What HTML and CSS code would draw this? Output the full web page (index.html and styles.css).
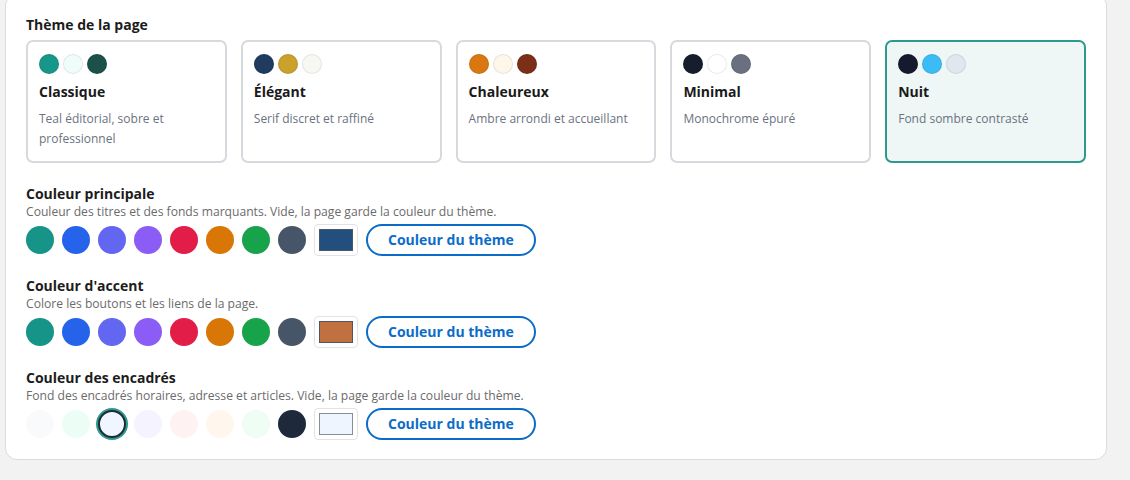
FILE: index.html
```html
<!DOCTYPE html>
<html lang="fr">
<head>
<meta charset="utf-8">
<link rel="stylesheet" href="styles.css">
</head>
<body>
<div class="page">
  <div class="panel">
    <div class="label">Thème de la page</div>
    <div class="themes">
      <div class="theme">
        <div class="dots"><span class="dot" style="background:#16978a"></span><span class="dot" style="background:#effcf9"></span><span class="dot" style="background:#1b5149"></span></div>
        <div class="theme-name">Classique</div>
        <div class="theme-desc">Teal éditorial, sobre et professionnel</div>
      </div>
      <div class="theme">
        <div class="dots"><span class="dot" style="background:#213b60"></span><span class="dot" style="background:#c9a12b"></span><span class="dot" style="background:#f8f8f3"></span></div>
        <div class="theme-name">Élégant</div>
        <div class="theme-desc">Serif discret et raffiné</div>
      </div>
      <div class="theme">
        <div class="dots"><span class="dot" style="background:#d97811"></span><span class="dot" style="background:#fff6ea"></span><span class="dot" style="background:#7b2f19"></span></div>
        <div class="theme-name">Chaleureux</div>
        <div class="theme-desc">Ambre arrondi et accueillant</div>
      </div>
      <div class="theme">
        <div class="dots"><span class="dot" style="background:#161d2c"></span><span class="dot" style="background:#ffffff"></span><span class="dot" style="background:#6b7080"></span></div>
        <div class="theme-name">Minimal</div>
        <div class="theme-desc">Monochrome épuré</div>
      </div>
      <div class="theme selected">
        <div class="dots"><span class="dot" style="background:#151b2d"></span><span class="dot" style="background:#3bbcf5"></span><span class="dot" style="background:#e1e7ef"></span></div>
        <div class="theme-name">Nuit</div>
        <div class="theme-desc">Fond sombre contrasté</div>
      </div>
    </div>

    <div class="section">
      <div class="label">Couleur principale</div>
      <div class="help">Couleur des titres et des fonds marquants. Vide, la page garde la couleur du thème.</div>
      <div class="row">
        <span class="sw" style="background:#159487"></span>
        <span class="sw" style="background:#2563eb"></span>
        <span class="sw" style="background:#6366f1"></span>
        <span class="sw" style="background:#8b5cf6"></span>
        <span class="sw" style="background:#e11d48"></span>
        <span class="sw" style="background:#d97706"></span>
        <span class="sw" style="background:#16a34a"></span>
        <span class="sw" style="background:#475569"></span>
        <span class="picker"><span class="picker-fill" style="background:#224f7e"></span></span>
        <button class="reset">Couleur du thème</button>
      </div>
    </div>

    <div class="section">
      <div class="label">Couleur d'accent</div>
      <div class="help">Colore les boutons et les liens de la page.</div>
      <div class="row">
        <span class="sw" style="background:#159487"></span>
        <span class="sw" style="background:#2563eb"></span>
        <span class="sw" style="background:#6366f1"></span>
        <span class="sw" style="background:#8b5cf6"></span>
        <span class="sw" style="background:#e11d48"></span>
        <span class="sw" style="background:#d97706"></span>
        <span class="sw" style="background:#16a34a"></span>
        <span class="sw" style="background:#475569"></span>
        <span class="picker"><span class="picker-fill" style="background:#c1703f"></span></span>
        <button class="reset">Couleur du thème</button>
      </div>
    </div>

    <div class="section">
      <div class="label">Couleur des encadrés</div>
      <div class="help">Fond des encadrés horaires, adresse et articles. Vide, la page garde la couleur du thème.</div>
      <div class="row">
        <span class="sw" style="background:#f8fafc"></span>
        <span class="sw" style="background:#ecfdf5"></span>
        <span class="sw active" style="background:#eff6ff"></span>
        <span class="sw" style="background:#f5f3ff"></span>
        <span class="sw" style="background:#fef2f2"></span>
        <span class="sw" style="background:#fff7ed"></span>
        <span class="sw" style="background:#f0fdf4"></span>
        <span class="sw" style="background:#1e293b"></span>
        <span class="picker"><span class="picker-fill light" style="background:#eef5ff"></span></span>
        <button class="reset">Couleur du thème</button>
      </div>
    </div>
  </div>
</div>
</body>
</html>
```

FILE: styles.css
```css
* { box-sizing: border-box; }
html, body { margin: 0; padding: 0; }
body {
  background: #f2f2f2;
  font-family: "Open Sans", "Noto Sans", sans-serif;
  color: #1a1a1a;
  width: 1130px;
  height: 480px;
  overflow: hidden;
}
.page {
  padding: 0 23px 0 5px;
}
.panel {
  margin-top: -6px;
  background: #ffffff;
  border: 1px solid #dcdcdc;
  border-radius: 12px;
  padding: 20px 20px 19px 20px;
}
.label {
  font-size: 14px;
  font-weight: 700;
  line-height: 20px;
  color: #1c1c1c;
}
.themes {
  margin-top: 5px;
  display: grid;
  grid-template-columns: repeat(5, 1fr);
  gap: 14px;
}
.theme {
  border: 2px solid #d6d9dd;
  border-radius: 7px;
  padding: 12px 12px 12px 11px;
  background: #fff;
}
.theme.selected {
  border-color: #2c9a8e;
  background: #eef7f6;
}
.dots {
  display: flex;
  gap: 4px;
  height: 20px;
}
.dot {
  width: 20px;
  height: 20px;
  border-radius: 50%;
  border: 1px solid rgba(0,0,0,0.08);
}
.theme-name {
  margin-top: 8px;
  font-size: 14px;
  font-weight: 700;
  line-height: 20px;
  color: #1a1a1a;
}
.theme-desc {
  margin-top: 7px;
  font-size: 12px;
  line-height: 20px;
  color: #6b7280;
}
.section {
  margin-top: 21px;
}
.section + .section {
  margin-top: 20px;
}
.help {
  font-size: 12.12px;
  line-height: 16px;
  color: #6b6b6b;
}
.row {
  margin-top: 4px;
  display: flex;
  align-items: center;
  gap: 8px;
  height: 32px;
}
.sw {
  width: 28px;
  height: 28px;
  border-radius: 50%;
  flex: none;
}
.sw.active {
  border: 2px solid #1f2937;
  box-shadow: 0 0 0 2px #2c9a8e;
}
.picker {
  width: 44px;
  height: 32px;
  border: 1px solid #e3e3e3;
  border-radius: 4px;
  padding: 4px;
  display: flex;
  background: #fff;
  flex: none;
}
.picker-fill {
  flex: 1;
  border: 1px solid #4b5563;
}
.picker-fill.light {
  border-color: #8a8f96;
}
.reset {
  height: 32px;
  padding: 0 20px;
  border: 2px solid #0b6cc9;
  border-radius: 16px;
  background: #fff;
  color: #0b6cc9;
  font-family: "Open Sans", "Noto Sans", sans-serif;
  font-size: 14px;
  font-weight: 700;
  line-height: 20px;
  cursor: pointer;
}
```
